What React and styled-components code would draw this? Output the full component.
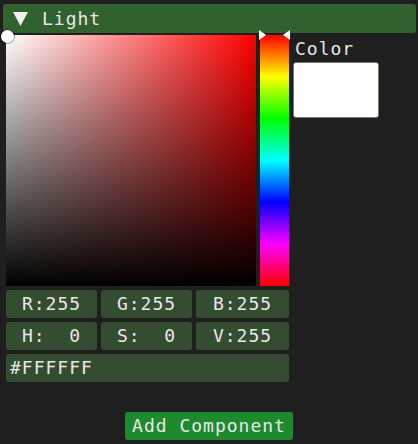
import React from "react";
import styled, { createGlobalStyle } from "styled-components";

const Global = createGlobalStyle`
  html, body { margin: 0; padding: 0; background: #1f1f1f; }
  body { width: 418px; height: 444px; overflow: hidden; }
  * { box-sizing: border-box; }
`;

const Window = styled.div`
  width: 418px;
  height: 444px;
  background: #1f1f1f;
  padding: 4px 2px 0 3px;
  display: flex;
  flex-direction: column;
  font-family: "DejaVu Sans Mono", "Liberation Mono", monospace;
  font-size: 18px;
  letter-spacing: 1px;
  color: #e8e8e8;
`;

const Header = styled.div`
  height: 29px;
  background: #30612f;
  border-radius: 3px;
  display: flex;
  align-items: center;
  gap: 14px;
  padding-left: 10px;
  line-height: 29px;
`;

const Arrow = styled.svg`
  width: 15px;
  height: 14px;
  flex: none;
`;

const Body = styled.div`
  display: flex;
  gap: 4px;
  padding: 2px 0 0 3px;
`;

const LeftCol = styled.div`
  width: 283px;
  display: flex;
  flex-direction: column;
  gap: 4px;
`;

const Picker = styled.div`
  display: flex;
  gap: 4px;
  height: 251px;
`;

const SVBox = styled.div`
  position: relative;
  width: 250px;
  height: 251px;
  background: linear-gradient(to bottom, rgba(0,0,0,0), #000),
    linear-gradient(to right, #fff, #ff0000);
`;

const Knob = styled.div`
  position: absolute;
  left: -5px;
  top: -5px;
  width: 13px;
  height: 13px;
  border-radius: 50%;
  background: #fff;
  box-shadow: 0 0 0 1px rgba(0,0,0,0.35);
`;

const HueBar = styled.div`
  position: relative;
  width: 29px;
  height: 251px;
  background: linear-gradient(to bottom, #f00 0%, #ff0 16.67%, #0f0 33.33%, #0ff 50%, #00f 66.67%, #f0f 83.33%, #f00 100%);
`;

const Marker = styled.svg`
  position: absolute;
  top: -5px;
  ${(p) => (p.$side === "left" ? "left: -1px;" : "right: -1px;")}
  width: 7px;
  height: 10px;
`;

const Grid = styled.div`
  display: grid;
  grid-template-columns: 91px 91px 93px;
  gap: 4px;
`;

const Cell = styled.div`
  height: 28px;
  background: #344c2f;
  border-radius: 3px;
  display: flex;
  align-items: center;
  justify-content: ${(p) => (p.$left ? "flex-start" : "center")};
  padding-left: ${(p) => (p.$left ? "4px" : "0")};
  white-space: pre;
  line-height: 28px;
`;

const RightCol = styled.div`
  display: flex;
  flex-direction: column;
  padding-top: 2px;
`;

const Label = styled.div`
  height: 25px;
  line-height: 24px;
  padding-left: 2px;
`;

const Swatch = styled.div`
  width: 86px;
  height: 56px;
  background: #fff;
  border-radius: 3px;
  border: 1px solid #6d7d68;
`;

const Footer = styled.div`
  display: flex;
  justify-content: center;
  padding: 30px 0 0 0;
  margin-left: -3px;
`;

const Button = styled.div`
  width: 168px;
  height: 28px;
  background: #1d8a2e;
  border-radius: 3px;
  display: flex;
  align-items: center;
  justify-content: center;
  line-height: 28px;
  margin-left: 2px;
`;

export default function App() {
  return (
    <>
      <Global />
      <Window>
        <Header>
          <Arrow viewBox="0 0 15 14">
            <polygon points="0,0 15,0 7.5,14" fill="#f0f0f0" />
          </Arrow>
          <span>Light</span>
        </Header>
        <Body>
          <LeftCol>
            <Picker>
              <SVBox>
                <Knob />
              </SVBox>
              <HueBar>
                <Marker $side="left" viewBox="0 0 7 10">
                  <polygon points="0,0 7,5 0,10" fill="#fff" />
                </Marker>
                <Marker $side="right" viewBox="0 0 7 10">
                  <polygon points="7,0 0,5 7,10" fill="#fff" />
                </Marker>
              </HueBar>
            </Picker>
            <Grid>
              <Cell>R:255</Cell>
              <Cell>G:255</Cell>
              <Cell>B:255</Cell>
              <Cell>{"H:  0"}</Cell>
              <Cell>{"S:  0"}</Cell>
              <Cell>V:255</Cell>
            </Grid>
            <Cell $left>#FFFFFF</Cell>
          </LeftCol>
          <RightCol>
            <Label>Color</Label>
            <Swatch />
          </RightCol>
        </Body>
        <Footer>
          <Button>Add Component</Button>
        </Footer>
      </Window>
    </>
  );
}
